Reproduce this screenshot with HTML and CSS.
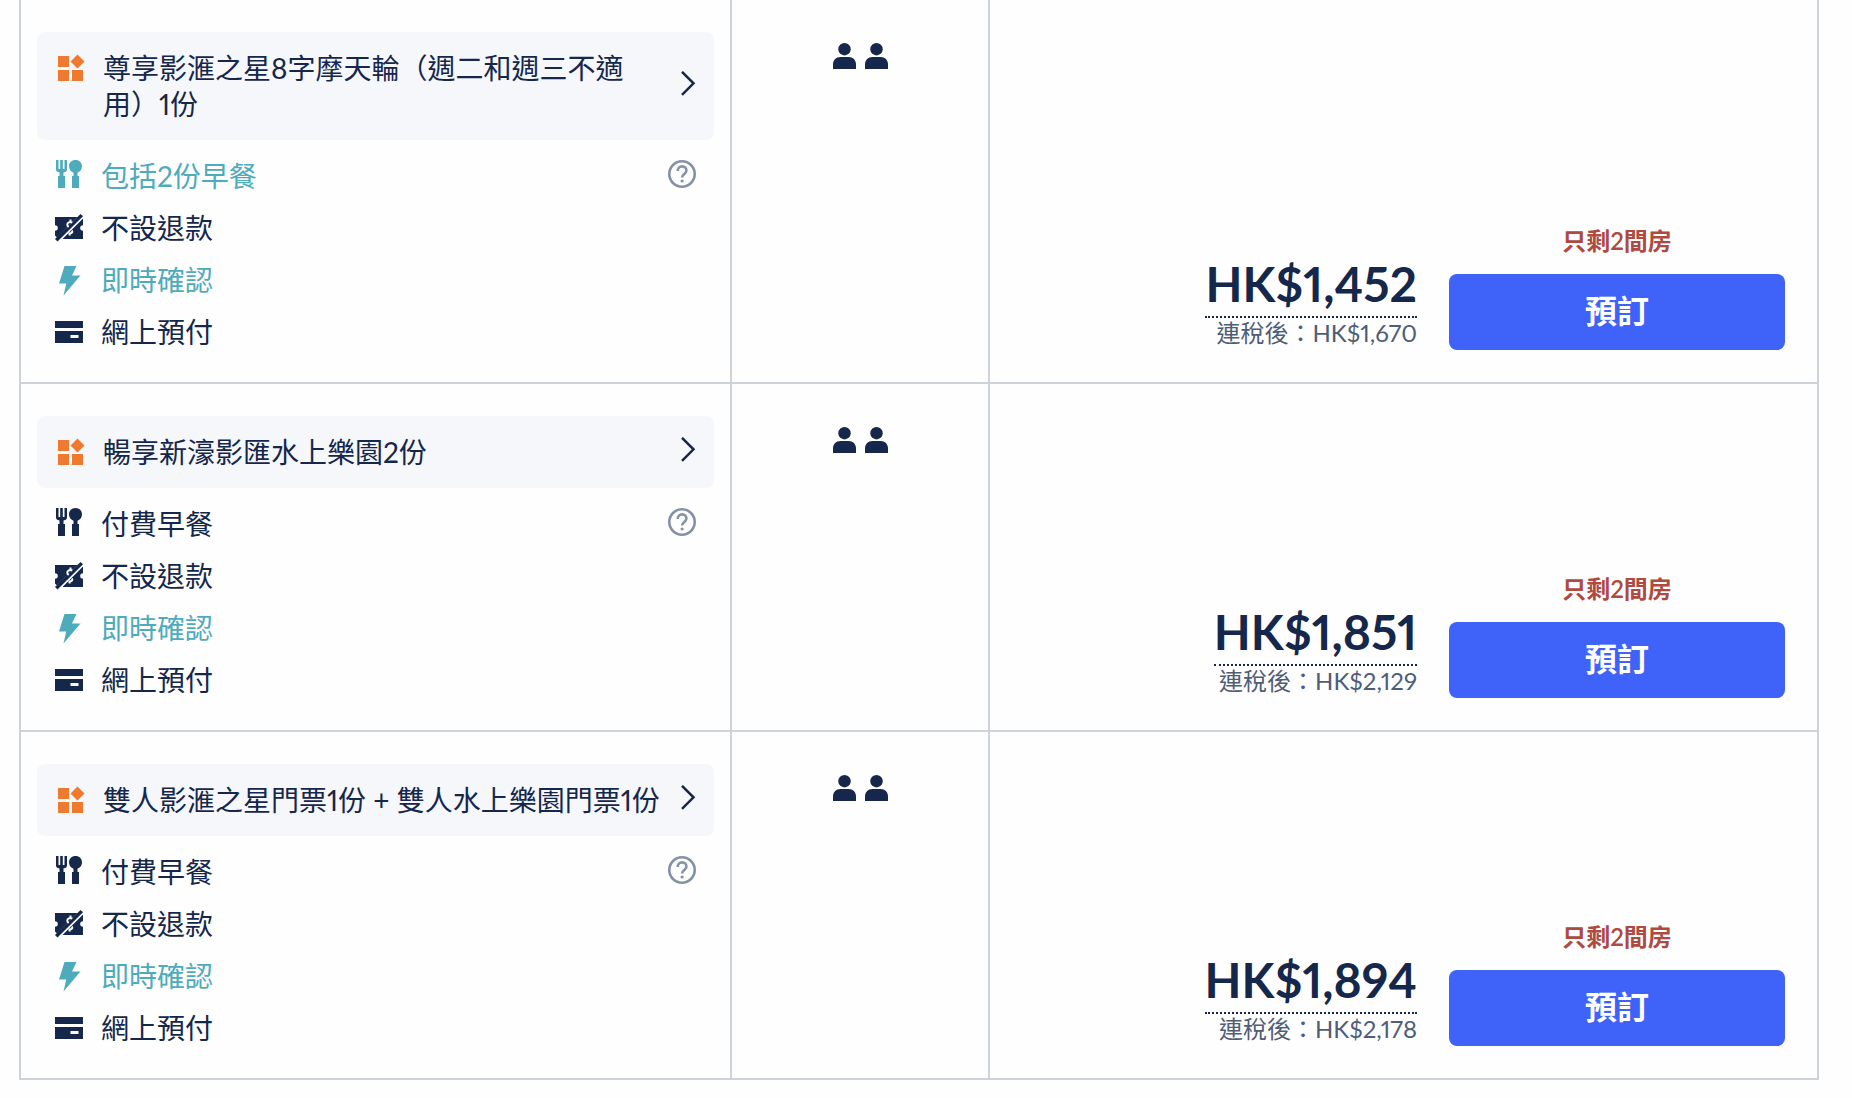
FILE: index.html
```html
<!DOCTYPE html>
<html lang="zh-Hant-HK">
<head>
  <meta charset="UTF-8">
  <meta name="viewport" content="width=device-width, initial-scale=1.0">
  <title>房型價格</title>
  <link rel="stylesheet" href="styles.css">
</head>
<body>

<!-- 共用圖示 -->
<svg class="sprite" aria-hidden="true">
  <symbol id="i-bundle" viewBox="0 0 28 28">
    <path d="M1 2h11v11H1zM1 16h11v11H1zM15 16h11v11H15zM20.500 .5l7 7-7 7-7-7z"/>
  </symbol>
  <symbol id="i-meal" viewBox="0 2 28 28" overflow="visible">
    <path d="M1 0h2.500v9h1.700V0h2.600v9h1.700V0H12v9.500c0 1.500-1 2.500-3.500 3V16H10v12H3V16h1.500v-3.500C2 12 1 11 1 9.500z"/>
    <path d="M20.500 0c3.800 0 6.500 2.700 6.500 6.300 0 3.200-2 5.700-4.500 6.400V16H24v12h-7V16h1.500v-3.300C16 12 14 9.500 14 6.300 14 2.700 16.700 0 20.500 0z"/>
  </symbol>
  <symbol id="i-norefund" viewBox="0 0 28 28">
    <path d="M0 3h22.500L2 23.500l-2-2v-4.700a2.800 2.800 0 0 0 0-5.600zM28 4.500v6.700a2.800 2.800 0 0 0 0 5.600V25H7.500z"/>
    <path d="M25.500 0L28 2.300 2.500 27.500 0 25z"/>
    <path class="cut" d="M15.500 5.500v3M17.300 8.600c-2.500-1.300-5 .2-5 2.200 0 1 .5 1.700 1.400 2.200M17 16.500c1 1.700-.5 3.500-3.500 3M14.700 19v2.500"/>
  </symbol>
  <symbol id="i-flash" viewBox="0 0 28 28" overflow="visible">
    <path d="M9.500 0h12L17 9.500h8.500L8.500 29.500l2.700-12H4z"/>
  </symbol>
  <symbol id="i-card" viewBox="0 0 28 28">
    <path d="M0 3h28v7H0zM0 13h28v12H0zM15.500 17v3h8v-3z" fill-rule="evenodd"/>
  </symbol>
  <symbol id="i-help" viewBox="0 2 28 28" overflow="visible">
    <circle cx="14" cy="14" r="12.700"/>
    <path d="M9.700 11c0-2.800 1.900-4.600 4.400-4.600s4.300 1.700 4.300 4.100c0 3.400-4.300 3.400-4.300 6.900"/>
    <circle class="dot" cx="14.100" cy="21" r="1.600"/>
  </symbol>
  <symbol id="i-arrow" viewBox="0 0 16 30">
    <path d="M2 .8L13.500 12.300 2 23.800"/>
  </symbol>
  <symbol id="i-person" viewBox="0 0 23 26">
    <circle cx="11.500" cy="6.200" r="6.200"/>
    <path d="M0 26v-4.500C0 17 3 14 7.500 14h8c4.500 0 7.500 3 7.500 7.500V26z"/>
  </symbol>
</svg>

<table class="rooms">
  <colgroup>
    <col class="col-plan">
    <col class="col-guest">
    <col class="col-price">
  </colgroup>
  <tbody>
    <tr>
      <td>
        <button type="button" class="bundle">
          <svg class="icon bundle-icon"><use href="#i-bundle"/></svg>
          <span class="bundle-name">尊享影滙之星8字摩天輪（週二和週三不適用）1份</span>
          <svg class="arrow"><use href="#i-arrow"/></svg>
        </button>
        <ul class="perks">
          <li class="good">
            <svg class="icon"><use href="#i-meal"/></svg><span>包括2份早餐</span>
            <button type="button" class="help" aria-label="早餐詳情"><svg class="icon"><use href="#i-help"/></svg></button>
          </li>
          <li><svg class="icon"><use href="#i-norefund"/></svg><span>不設退款</span></li>
          <li class="good"><svg class="icon"><use href="#i-flash"/></svg><span>即時確認</span></li>
          <li><svg class="icon"><use href="#i-card"/></svg><span>網上預付</span></li>
        </ul>
      </td>
      <td>
        <div class="guests" role="img" aria-label="2位成人">
          <svg class="person"><use href="#i-person"/></svg>
          <svg class="person"><use href="#i-person"/></svg>
        </div>
      </td>
      <td class="price-cell">
        <div class="offer">
          <div class="price">
            <span class="amount">HK$1,452</span>
            <span class="tax">連稅後：HK$1,670</span>
          </div>
          <div class="action">
            <span class="left">只剩2間房</span>
            <button type="button" class="book">預訂</button>
          </div>
        </div>
      </td>
    </tr>
    <tr>
      <td>
        <button type="button" class="bundle">
          <svg class="icon bundle-icon"><use href="#i-bundle"/></svg>
          <span class="bundle-name">暢享新濠影匯水上樂園2份</span>
          <svg class="arrow"><use href="#i-arrow"/></svg>
        </button>
        <ul class="perks">
          <li>
            <svg class="icon"><use href="#i-meal"/></svg><span>付費早餐</span>
            <button type="button" class="help" aria-label="早餐詳情"><svg class="icon"><use href="#i-help"/></svg></button>
          </li>
          <li><svg class="icon"><use href="#i-norefund"/></svg><span>不設退款</span></li>
          <li class="good"><svg class="icon"><use href="#i-flash"/></svg><span>即時確認</span></li>
          <li><svg class="icon"><use href="#i-card"/></svg><span>網上預付</span></li>
        </ul>
      </td>
      <td>
        <div class="guests" role="img" aria-label="2位成人">
          <svg class="person"><use href="#i-person"/></svg>
          <svg class="person"><use href="#i-person"/></svg>
        </div>
      </td>
      <td class="price-cell">
        <div class="offer">
          <div class="price">
            <span class="amount">HK$1,851</span>
            <span class="tax">連稅後：HK$2,129</span>
          </div>
          <div class="action">
            <span class="left">只剩2間房</span>
            <button type="button" class="book">預訂</button>
          </div>
        </div>
      </td>
    </tr>
    <tr>
      <td>
        <button type="button" class="bundle">
          <svg class="icon bundle-icon"><use href="#i-bundle"/></svg>
          <span class="bundle-name">雙人影滙之星門票1份 + 雙人水上樂園門票1份</span>
          <svg class="arrow"><use href="#i-arrow"/></svg>
        </button>
        <ul class="perks">
          <li>
            <svg class="icon"><use href="#i-meal"/></svg><span>付費早餐</span>
            <button type="button" class="help" aria-label="早餐詳情"><svg class="icon"><use href="#i-help"/></svg></button>
          </li>
          <li><svg class="icon"><use href="#i-norefund"/></svg><span>不設退款</span></li>
          <li class="good"><svg class="icon"><use href="#i-flash"/></svg><span>即時確認</span></li>
          <li><svg class="icon"><use href="#i-card"/></svg><span>網上預付</span></li>
        </ul>
      </td>
      <td>
        <div class="guests" role="img" aria-label="2位成人">
          <svg class="person"><use href="#i-person"/></svg>
          <svg class="person"><use href="#i-person"/></svg>
        </div>
      </td>
      <td class="price-cell">
        <div class="offer">
          <div class="price">
            <span class="amount">HK$1,894</span>
            <span class="tax">連稅後：HK$2,178</span>
          </div>
          <div class="action">
            <span class="left">只剩2間房</span>
            <button type="button" class="book">預訂</button>
          </div>
        </div>
      </td>
    </tr>
  </tbody>
</table>

</body>
</html>
```
FILE: styles.css
```css
* {
  box-sizing: border-box;
}
body {
  margin: 0;
  padding: 0 33px 18px 19px;
  background: #fefefe;
  color: #15274b;
  font-family: Lato, "Noto Sans CJK TC", sans-serif;
  font-size: 28px;
  line-height: 36px;
  font-variant-numeric: proportional-nums;
  text-spacing-trim: space-all;
}
button {
  margin: 0;
  padding: 0;
  border: none;
  background: none;
  color: inherit;
  font: inherit;
  font-variant-numeric: proportional-nums;
  cursor: pointer;
}
.sprite {
  display: none;
}
.icon {
  flex: none;
  display: block;
  width: 28px;
  height: 28px;
  overflow: visible;
  fill: currentColor;
}

/* 表格 */
.rooms {
  width: 100%;
  table-layout: fixed;
  border-spacing: 0;
  border-left: 2px solid #ced2d9;
}
.col-plan {
  width: 711px;
}
.col-guest {
  width: 258px;
}
.rooms td {
  padding: 32px 16px;
  vertical-align: top;
  border-right: 2px solid #ced2d9;
  border-bottom: 2px solid #ced2d9;
}
.rooms .price-cell {
  padding: 32px;
  vertical-align: bottom;
}

/* 套餐 */
.bundle {
  display: flex;
  align-items: center;
  gap: 18px;
  width: 100%;
  padding: 18px 18px 18px 20px;
  border-radius: 8px;
  background: #f5f7fb;
  text-align: left;
  text-spacing-trim: space-all;
}
.bundle-icon {
  align-self: flex-start;
  margin-top: 4px;
  color: #ee7a30;
}
.bundle-name {
  flex: 1;
}
.arrow {
  flex: none;
  width: 16px;
  height: 30px;
  margin-left: -8px;
  fill: none;
  stroke: currentColor;
  stroke-width: 2.500px;
}
.perks {
  display: flex;
  flex-direction: column;
  gap: 16px;
  margin: 18px 0 0;
  padding: 0 18px;
  list-style: none;
}
.perks li {
  display: flex;
  align-items: center;
  gap: 18px;
}
.good {
  color: #4eabbc;
}
.help {
  margin-left: auto;
  color: #8592a6;
}
.help .icon {
  fill: none;
  stroke: currentColor;
  stroke-width: 2.600px;
}
.dot {
  fill: #8592a6;
  stroke: none;
}
.cut {
  fill: none;
  stroke: #fefefe;
  stroke-width: 2px;
}

/* 人數 */
.guests {
  display: flex;
  justify-content: center;
  gap: 9px;
  padding-top: 11px;
}
.person {
  width: 23px;
  height: 26px;
  fill: currentColor;
}

/* 價格 */
.offer {
  display: flex;
  justify-content: flex-end;
  align-items: flex-end;
  gap: 32px;
}
.price {
  display: flex;
  flex-direction: column;
  align-items: flex-end;
  padding-bottom: 2px;
}
.amount {
  border-bottom: 2px dotted #15274b;
  font-size: 48px;
  font-weight: 700;
  line-height: 64px;
}
.tax {
  color: #4f5d78;
  font-size: 24px;
  line-height: 30px;
}
.action {
  display: flex;
  flex-direction: column;
  align-items: center;
  width: 336px;
}
.left {
  margin-bottom: 18px;
  color: #ae4a3f;
  font-size: 24px;
  font-weight: 600;
  line-height: 30px;
}
.book {
  width: 100%;
  height: 76px;
  padding-bottom: 2px;
  border-radius: 8px;
  background: #3f63f8;
  color: #fff;
  font-size: 32px;
  font-weight: 600;
}
```
